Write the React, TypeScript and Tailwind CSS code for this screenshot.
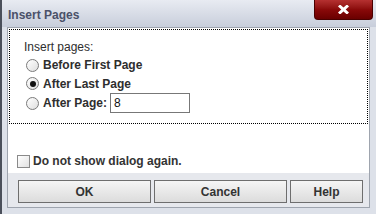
import React from "react";

function Radio({ checked }: { checked?: boolean }) {
  return (
    <span className="flex h-[13px] w-[13px] shrink-0 items-center justify-center rounded-full border border-[#7a7a7a] bg-gradient-to-br from-white to-[#dedede]">
      {checked ? <span className="h-[6px] w-[6px] rounded-full bg-[#111]" /> : null}
    </span>
  );
}

function Btn({ label, w }: { label: string; w: string }) {
  return (
    <button
      type="button"
      className={`${w} h-[23px] border border-[#6e6e6e] bg-gradient-to-b from-[#f5f5f5] to-[#dcdcdc] text-[12px] font-bold leading-[14px] text-[#333]`}
    >
      {label}
    </button>
  );
}

export default function App() {
  return (
    <div className="flex h-[214px] w-[376px] flex-col overflow-hidden border-l-2 border-[#4b505b] bg-[#dde1e9] font-['Liberation_Sans',Arial,sans-serif]">
      <div className="flex h-[27px] items-start justify-between bg-gradient-to-b from-[#e8ebf2] to-[#c8cedb]">
        <span className="pl-[6px] pt-[8px] text-[12px] font-bold leading-[14px] text-[#4b5169]">
          Insert Pages
        </span>
        <button
          type="button"
          className="mr-[3px] flex h-[20px] w-[59px] items-center justify-center rounded-b-[4px] border border-t-0 border-[#4a0000] bg-gradient-to-b from-[#b53030] via-[#8a0a0a] to-[#6a0000]"
        >
          <svg width="11" height="9" viewBox="0 0 11 9">
            <path d="M1 0.5 L10 8.5 M10 0.5 L1 8.5" stroke="white" strokeWidth="3" />
          </svg>
        </button>
      </div>

      <div className="ml-[5px] flex h-[181px] w-[363px] flex-col border border-[#9ea4ae]">
        <div className="flex h-[145px] flex-col bg-white p-px">
          <div className="flex h-[95px] flex-col border border-dotted border-black pl-[14px] pt-[10px] text-[12px] leading-[14px] text-[#2e2e2e]">
            <span>Insert pages:</span>
            <div className="mt-[2px] flex h-[18px] items-center gap-[4px] pl-[2px] font-bold">
              <Radio />
              <span>Before First Page</span>
            </div>
            <div className="flex h-[19px] items-center gap-[4px] pl-[2px] font-bold">
              <Radio checked />
              <span>After Last Page</span>
            </div>
            <div className="flex h-[20px] items-center gap-[4px] pl-[2px] font-bold">
              <Radio />
              <span>After Page:</span>
              <span className="ml-[-1px] flex h-[20px] w-[80px] items-center border border-[#777] pl-[3px] font-normal text-[#111]">
                8
              </span>
            </div>
          </div>
          <div className="mt-[30px] flex h-[14px] items-center gap-[3px] pl-[8px] text-[12px] font-bold leading-[14px] text-[#333]">
            <span className="h-[13px] w-[13px] border border-[#8a8a8a] bg-gradient-to-br from-white to-[#e2e2e2]" />
            <span>Do not show dialog again.</span>
          </div>
        </div>
        <div className="flex flex-1 gap-[3px] bg-[#e6e8ed] pl-[10px] pt-[7px]">
          <Btn label="OK" w="w-[133px]" />
          <Btn label="Cancel" w="w-[133px]" />
          <Btn label="Help" w="w-[73px]" />
        </div>
      </div>
    </div>
  );
}
